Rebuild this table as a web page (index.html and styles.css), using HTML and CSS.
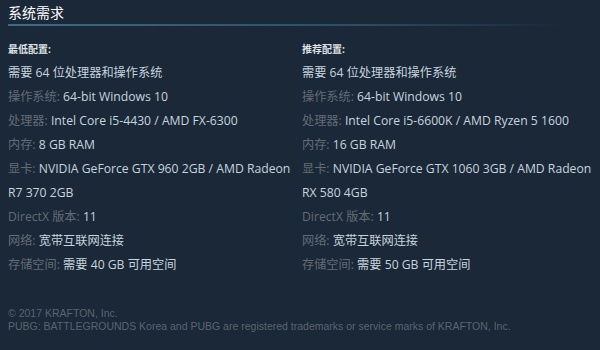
FILE: index.html
```html
<!DOCTYPE html>
<html lang="zh">
<head>
<meta charset="utf-8">
<link rel="stylesheet" href="styles.css">
</head>
<body>
<div class="page">
  <h2 class="title">系统需求</h2>
  <div class="cols">
    <div class="col">
      <div class="head">最低配置:</div>
      <ul class="list">
        <li>需要 64 位处理器和操作系统</li>
        <li><span class="lbl">操作系统:</span> 64-bit Windows 10</li>
        <li><span class="lbl">处理器:</span> Intel Core i5-4430 / AMD FX-6300</li>
        <li><span class="lbl">内存:</span> 8 GB RAM</li>
        <li><span class="lbl">显卡:</span> NVIDIA GeForce GTX 960 2GB / AMD Radeon R7 370 2GB</li>
        <li><span class="lbl">DirectX 版本:</span> 11</li>
        <li><span class="lbl">网络:</span> 宽带互联网连接</li>
        <li><span class="lbl">存储空间:</span> 需要 40 GB 可用空间</li>
      </ul>
    </div>
    <div class="col">
      <div class="head">推荐配置:</div>
      <ul class="list">
        <li>需要 64 位处理器和操作系统</li>
        <li><span class="lbl">操作系统:</span> 64-bit Windows 10</li>
        <li><span class="lbl">处理器:</span> Intel Core i5-6600K / AMD Ryzen 5 1600</li>
        <li><span class="lbl">内存:</span> 16 GB RAM</li>
        <li><span class="lbl">显卡:</span> NVIDIA GeForce GTX 1060 3GB / AMD Radeon RX 580 4GB</li>
        <li><span class="lbl">DirectX 版本:</span> 11</li>
        <li><span class="lbl">网络:</span> 宽带互联网连接</li>
        <li><span class="lbl">存储空间:</span> 需要 50 GB 可用空间</li>
      </ul>
    </div>
  </div>
  <div class="legal">
    <div>© 2017 KRAFTON, Inc.</div>
    <div>PUBG: BATTLEGROUNDS Korea and PUBG are registered trademarks or service marks of KRAFTON, Inc.</div>
  </div>
</div>
</body>
</html>
```

FILE: styles.css
```css
html, body {
  margin: 0;
  padding: 0;
  background: #1b2838;
}
body {
  width: 600px;
  height: 350px;
  overflow: hidden;
  font-family: "Open Sans", "Noto Sans CJK SC", sans-serif;
}
.page {
  padding: 4px 0 0 8px;
}
.title {
  margin: 0 8px 0 0;
  font-size: 14px;
  font-weight: normal;
  color: #ffffff;
  line-height: 18px;
  padding-bottom: 4px;
  background: linear-gradient(to right, #3d6b86 0%, #2c4d63 60%, rgba(44,77,99,0) 95%) no-repeat left bottom / 100% 2px;
}
.cols {
  display: grid;
  grid-template-columns: 291px 296px;
  gap: 3px;
  margin-top: 16px;
}
.head {
  font-size: 10px;
  font-weight: bold;
  color: #dfe3e6;
  line-height: 14px;
  margin-bottom: 5px;
}
.list {
  list-style: none;
  margin: 0;
  padding: 0;
  font-size: 12.2px;
  line-height: 24px;
  color: #c6d4df;
}
.lbl {
  color: #626c76;
}
.legal {
  margin-top: 30px;
  font-family: "Liberation Sans", Arial, sans-serif;
  font-size: 10.5px;
  line-height: 13px;
  color: #5a646e;
}
```
